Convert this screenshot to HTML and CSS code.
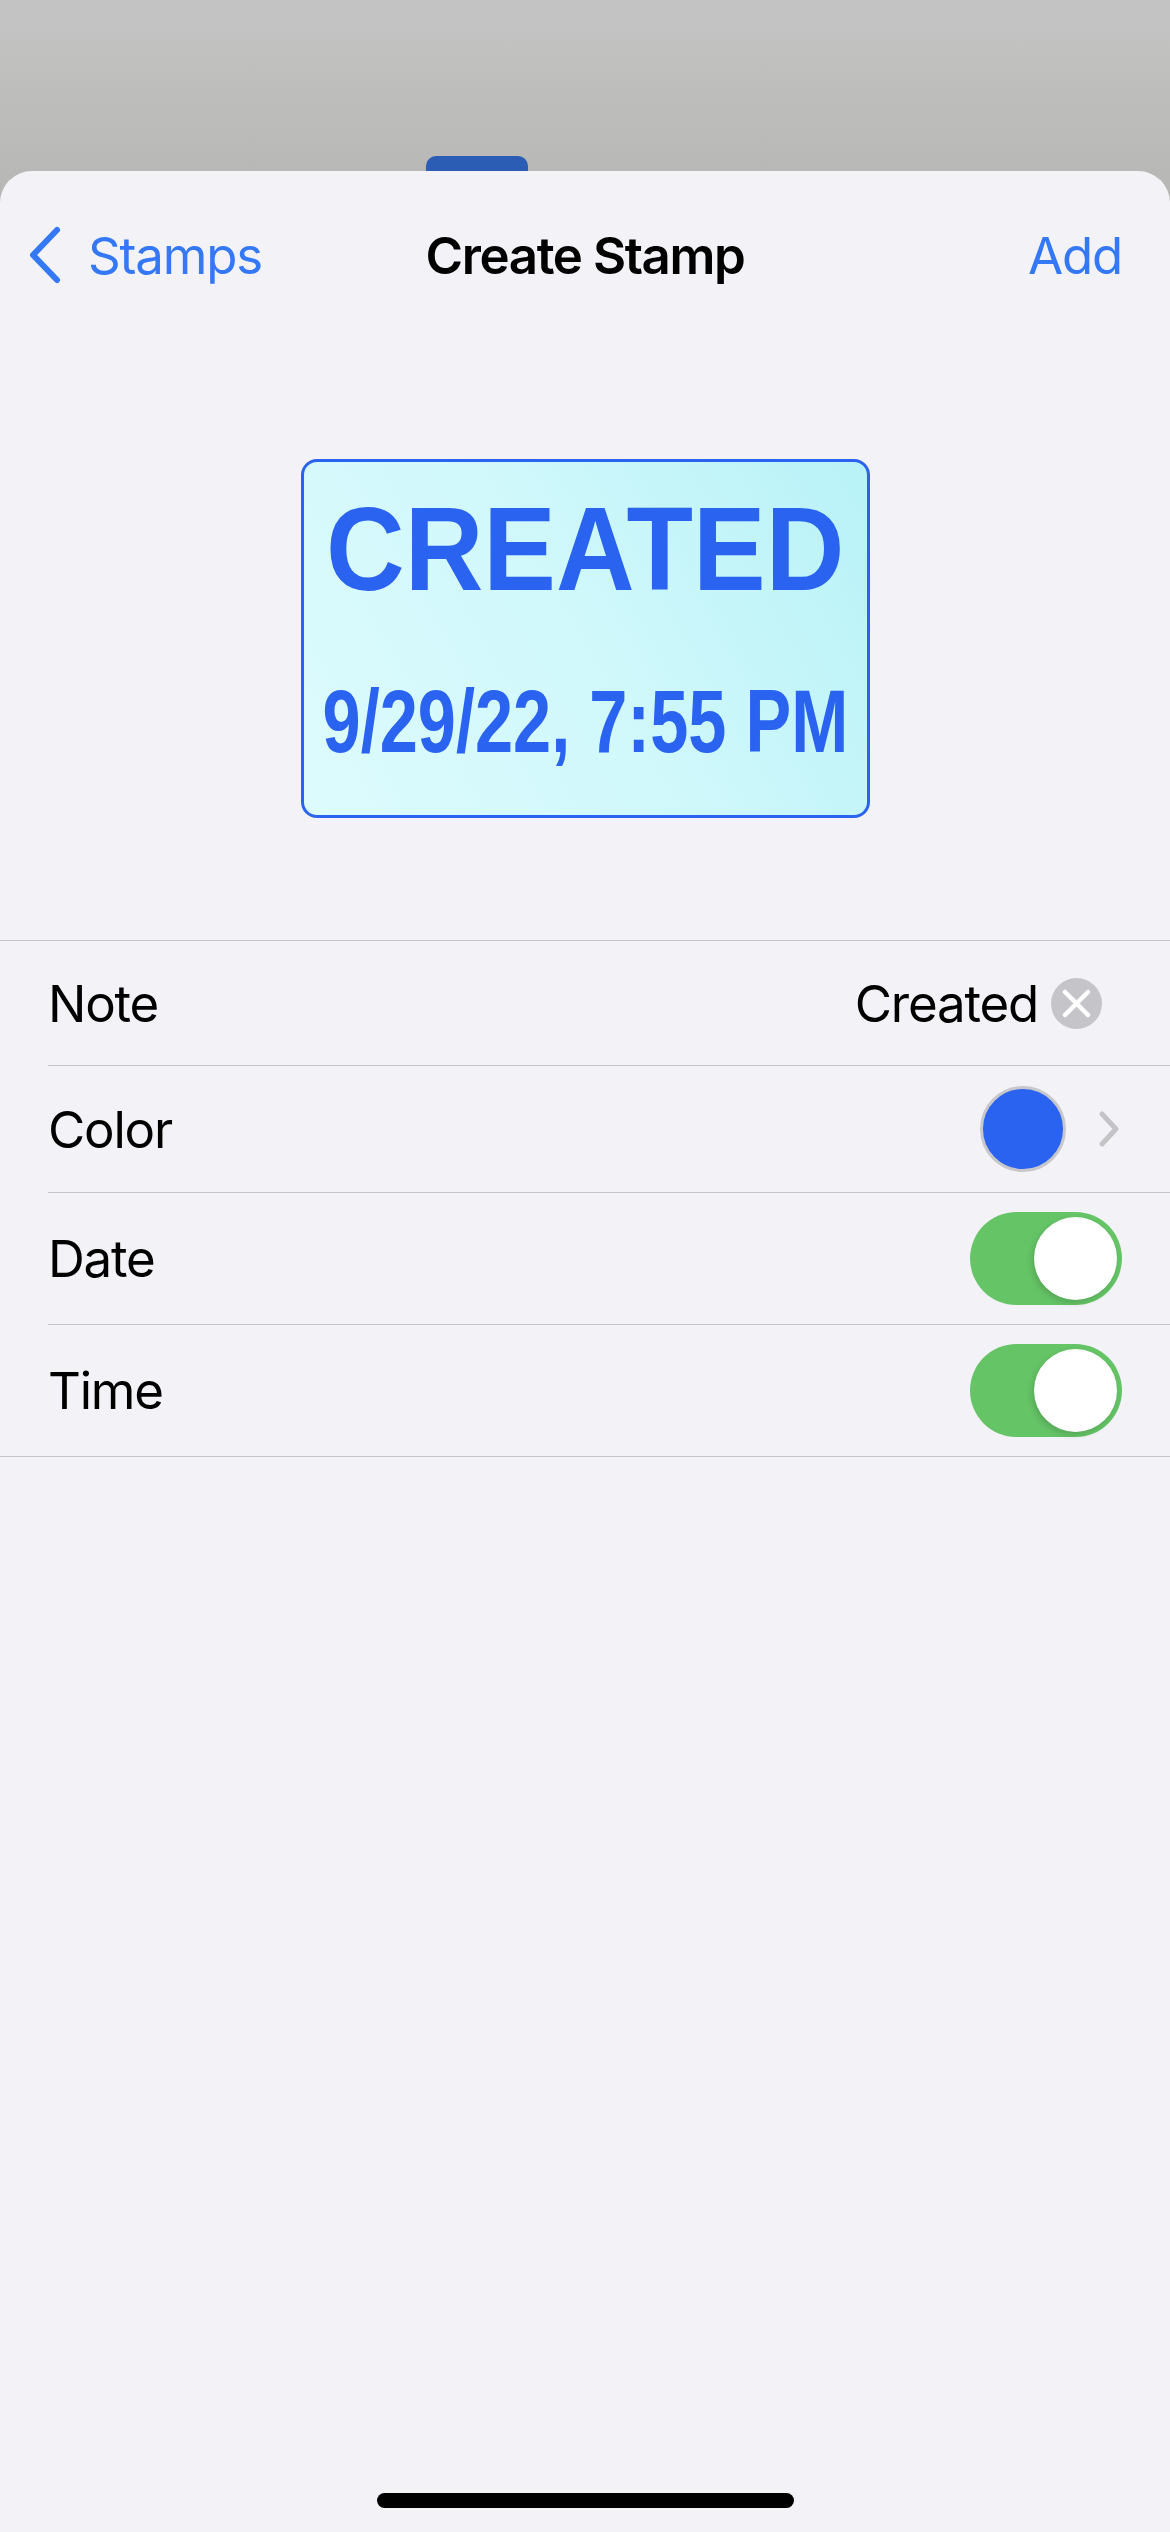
FILE: index.html
```html
<!doctype html>
<html lang="en">
<head>
	<meta charset="UTF-8">
	<title>Create Stamp</title>
	<link rel="stylesheet" href="styles.css">
</head>
<body>
	<div class="backdrop">
		<div class="tab"></div>
	</div>
	<div class="sheet">
		<div class="navbar">
			<div class="back">
				<svg width="34" height="58" viewBox="0 0 34 58">
					<path d="M30 4 L6 29 L30 54" fill="none" stroke="#3478f6" stroke-width="6" stroke-linecap="round" stroke-linejoin="round"/>
				</svg>
				<span>Stamps</span>
			</div>
			<div class="title">Create Stamp</div>
			<div class="add">Add</div>
		</div>

		<div class="preview">
			<div class="stamp">
				<div class="stamp-note"><span>CREATED</span></div>
				<div class="stamp-date"><span>9/29/22, 7:55 PM</span></div>
			</div>
		</div>

		<div class="list">
			<div class="row row-note">
				<div class="label">Note</div>
				<div class="value">
					<span>Created</span>
					<svg class="clear" width="51" height="51" viewBox="0 0 51 51">
						<circle cx="25.5" cy="25.5" r="25.5" fill="#c4c4c9"/>
						<path d="M14 14 L37 37 M37 14 L14 37" stroke="#fff" stroke-width="4.5" stroke-linecap="round"/>
					</svg>
				</div>
			</div>
			<div class="row row-color">
				<div class="label">Color</div>
				<div class="value">
					<div class="swatch"></div>
					<svg class="chevron" width="22" height="38" viewBox="0 0 22 38">
						<path d="M4 4 L18 19 L4 34" fill="none" stroke="#c4c4c7" stroke-width="5" stroke-linecap="round" stroke-linejoin="round"/>
					</svg>
				</div>
			</div>
			<div class="row row-switch">
				<div class="label">Date</div>
				<div class="switch"><div class="knob"></div></div>
			</div>
			<div class="row row-switch">
				<div class="label">Time</div>
				<div class="switch"><div class="knob"></div></div>
			</div>
		</div>

		<div class="home-bar"></div>
	</div>
</body>
</html>
```

FILE: styles.css
```css
*{
	padding:0;
	margin:0;
	box-sizing:border-box;
}
body{
	width:1170px;
	height:2532px;
	overflow:hidden;
	background:linear-gradient(#c4c4c4, #b8b9b6 171px);
	font-family:Inter, "Noto Sans", sans-serif;
	letter-spacing:-1.2px;
	color:#000;
}
.backdrop{
	height:171px;
	display:flex;
	align-items:flex-end;
	padding-left:426px;
}
.tab{
	width:102px;
	height:15px;
	background:#2a5db3;
	border-radius:10px 10px 0 0;
}
.sheet{
	height:2361px;
	background:#f2f2f7;
	border-radius:32px 32px 0 0;
	display:flex;
	flex-direction:column;
}
.navbar{
	height:168px;
	display:grid;
	grid-template-columns:1fr auto 1fr;
	align-items:center;
	padding:0 48px;
	font-size:51px;
}
.back{
	display:flex;
	align-items:center;
	gap:27px;
	margin-left:-21px;
	color:#3478f6;
}
.back svg{
	display:block;
}
.title{
	font-weight:600;
	letter-spacing:-1.4px;
}
.add{
	justify-self:end;
	color:#3478f6;
}
.preview{
	display:flex;
	justify-content:center;
	padding-top:120px;
	height:601px;
}
.stamp{
	width:569px;
	height:359px;
	border:3px solid #2b63f1;
	border-radius:16px;
	background:linear-gradient(60deg, #ddfbfd, #d0f8fb 50%, #b8f2f7);
	display:flex;
	flex-direction:column;
	align-items:center;
	padding-top:27px;
	font-family:"Liberation Sans", Arial, sans-serif;
	font-weight:bold;
	letter-spacing:0;
	color:#2b63f1;
	white-space:nowrap;
}
.stamp-note{
	font-size:119px;
	line-height:119px;
}
.stamp-note span{
	display:inline-block;
	transform:scaleX(0.915);
}
.stamp-date{
	margin-top:69px;
	font-size:89px;
	line-height:89px;
}
.stamp-date span{
	display:inline-block;
	transform:scaleX(0.77);
}
.list{
	border-top:1px solid #c6c6c8;
	border-bottom:1px solid #c6c6c8;
	font-size:51px;
}
.row{
	margin-left:48px;
	padding-right:48px;
	display:flex;
	align-items:center;
	justify-content:space-between;
	border-bottom:1px solid #c6c6c8;
}
.row:last-child{
	border-bottom:none;
}
.row-note{
	height:125px;
}
.row-color{
	height:127px;
}
.row-switch{
	height:132px;
}
.row-switch:last-child{
	height:131px;
}
.value{
	display:flex;
	align-items:center;
}
.row-note .value{
	gap:13px;
	margin-right:20px;
}
.clear{
	display:block;
}
.swatch{
	width:86px;
	height:86px;
	border-radius:50%;
	background:#2963f0;
	border:3px solid #c7c7cc;
}
.chevron{
	display:block;
	margin-left:32px;
	margin-right:2px;
}
.switch{
	width:152px;
	height:93px;
	border-radius:47px;
	background:#65c466;
	display:flex;
	align-items:center;
	justify-content:flex-end;
	padding-right:5px;
}
.knob{
	width:83px;
	height:83px;
	border-radius:50%;
	background:#fff;
	box-shadow:-2px 3px 6px rgba(0,0,0,0.15);
}
.home-bar{
	margin:auto auto 24px 377px;
	width:417px;
	height:15px;
	border-radius:8px;
	background:#000;
}
```
